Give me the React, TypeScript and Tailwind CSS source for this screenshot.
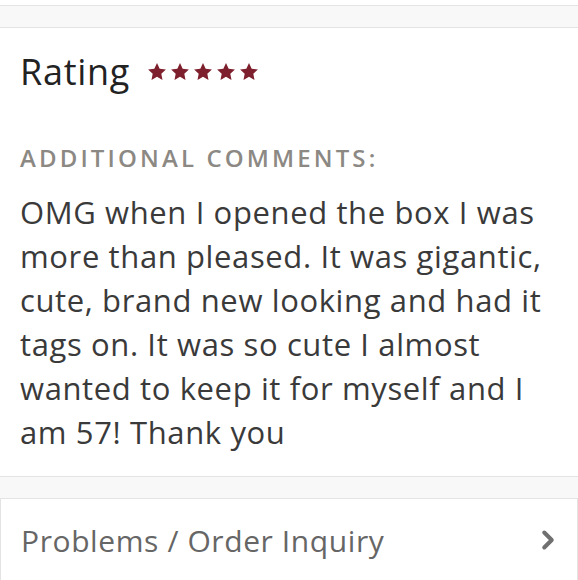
import { ChevronRight } from "lucide-react";

const STAR = "M12 2.2l2.9 6.2 6.8.8-5 4.7 1.3 6.7L12 17.2l-6 3.4 1.3-6.7-5-4.7 6.8-.8z";

function Stars({ count }: { count: number }) {
  return (
    <div className="flex items-center gap-[1px]">
      {Array.from({ length: count }).map((_, i) => (
        <svg key={i} viewBox="0 0 24 24" className="w-[22px] h-[22px]" fill="#7d1f2c">
          <path d={STAR} />
        </svg>
      ))}
    </div>
  );
}

export default function App() {
  return (
    <div className="w-[578px] h-[580px] bg-white overflow-hidden" style={{ fontFamily: "'Open Sans', sans-serif" }}>
      <div className="h-[5px]" />
      <div className="h-[23px] bg-[#f8f8f8] border-y border-[#e3e3e3]" />

      {/* Review section */}
      <div className="px-5 pt-[24px]">
        <div className="flex items-center gap-[16px] h-[40px]">
          <span className="text-[36px] leading-none tracking-[0.02em] text-[#222]">Rating</span>
          <Stars count={5} />
        </div>

        <div className="mt-[54px] text-[24px] leading-none tracking-[0.13em] text-[#8c8883] font-semibold">
          ADDITIONAL COMMENTS:
        </div>

        <p className="mt-[20px] text-[31px] leading-[44px] tracking-[0.02em] text-[#3a3a3a]">
          OMG when I opened the box I was
          <br />
          more than pleased. It was gigantic,
          <br />
          cute, brand new looking and had it
          <br />
          tags on. It was so cute I almost
          <br />
          wanted to keep it for myself and I
          <br />
          am 57! Thank you
        </p>
      </div>

      <div className="mt-[22px] h-[23px] bg-[#f8f8f8] border-y border-[#e3e3e3]" />

      <div className="h-[82px] border-x border-[#e3e3e3] flex items-center justify-between pl-5 pr-[14px]">
        <span className="text-[30px] tracking-[0.02em] text-[#666]">Problems / Order Inquiry</span>
        <ChevronRight size={30} strokeWidth={3.2} color="#707070" />
      </div>
    </div>
  );
}
